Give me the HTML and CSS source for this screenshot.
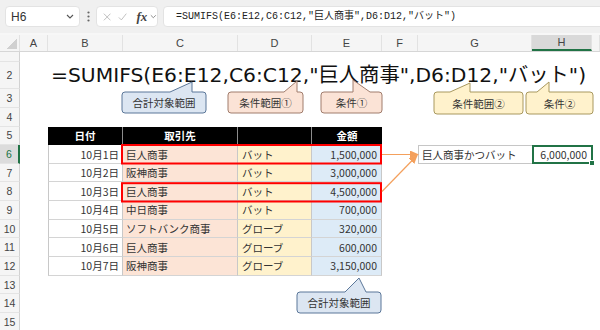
FILE: index.html
```html
<!DOCTYPE html>
<html lang="ja">
<head>
  <meta charset="UTF-8">
  <meta name="viewport" content="width=device-width, initial-scale=1.0">
  <title>SUMIFS 複数条件</title>
  <link rel="stylesheet" href="styles.css">
</head>
<body>

<div class="app">
  <!-- Formula bar -->
  <div class="toolbar">
    <div class="name-box">
      <span>H6</span>
      <svg class="chev" width="8" height="5" viewBox="0 0 8 5"><path d="M1 1l3 3 3-3" fill="none" stroke="#555" stroke-width="1.1"/></svg>
    </div>
    <div class="grip">
      <svg width="3" height="11" viewBox="0 0 3 11"><circle cx="1.5" cy="1.5" r="1.1" fill="#666"/><circle cx="1.5" cy="5.5" r="1.1" fill="#666"/><circle cx="1.5" cy="9.5" r="1.1" fill="#666"/></svg>
    </div>
    <div class="fx-box">
      <svg width="10" height="10" viewBox="0 0 10 10"><path d="M1 1l8 8M9 1l-8 8" stroke="#b5b5b5" stroke-width="1"/></svg>
      <svg width="11" height="10" viewBox="0 0 11 10"><path d="M1 5.5l3 3 6-7.5" fill="none" stroke="#b5b5b5" stroke-width="1"/></svg>
      <span class="fx">fx</span>
      <svg width="8" height="5" viewBox="0 0 8 5"><path d="M1 1l3 3 3-3" fill="none" stroke="#777" stroke-width="1"/></svg>
    </div>
    <div class="formula-input">=SUMIFS(E6:E12,C6:C12,"巨人商事",D6:D12,"バット")</div>
  </div>

  <!-- Sheet -->
  <div class="sheet">
    <div class="row col-head">
      <div class="corner"></div>
      <div>A</div><div>B</div><div>C</div><div>D</div><div>E</div><div>F</div><div>G</div><div class="sel">H</div><div></div>
    </div>

    <div class="row r1"><div class="rh"></div></div>
    <div class="row r2">
      <div class="rh">2</div><div></div>
      <div class="big-formula">=SUMIFS(E6:E12,C6:C12,"巨人商事",D6:D12,"バット")</div>
    </div>
    <div class="row r3"><div class="rh">3</div></div>
    <div class="row r4"><div class="rh">4</div></div>

    <div class="row">
      <div class="rh">5</div><div></div>
      <div class="th">日付</div><div class="th">取引先</div><div class="th"></div><div class="th">金額</div>
    </div>
    <div class="row">
      <div class="rh rh-sel">6</div><div></div>
      <div class="td date">10月1日</div><div class="td corp">巨人商事</div><div class="td item">バット</div><div class="td amt">1,500,000</div>
      <div></div>
      <div class="result-label">巨人商事かつバット</div>
      <div class="result-cell">6,000,000<span class="handle"></span></div>
    </div>
    <div class="row">
      <div class="rh">7</div><div></div>
      <div class="td date">10月2日</div><div class="td corp">阪神商事</div><div class="td item">バット</div><div class="td amt">3,000,000</div>
    </div>
    <div class="row">
      <div class="rh">8</div><div></div>
      <div class="td date">10月3日</div><div class="td corp">巨人商事</div><div class="td item">バット</div><div class="td amt">4,500,000</div>
    </div>
    <div class="row">
      <div class="rh">9</div><div></div>
      <div class="td date">10月4日</div><div class="td corp">中日商事</div><div class="td item">バット</div><div class="td amt">700,000</div>
    </div>
    <div class="row">
      <div class="rh">10</div><div></div>
      <div class="td date">10月5日</div><div class="td corp">ソフトバンク商事</div><div class="td item">グローブ</div><div class="td amt">320,000</div>
    </div>
    <div class="row">
      <div class="rh">11</div><div></div>
      <div class="td date">10月6日</div><div class="td corp">巨人商事</div><div class="td item">グローブ</div><div class="td amt">600,000</div>
    </div>
    <div class="row">
      <div class="rh">12</div><div></div>
      <div class="td date">10月7日</div><div class="td corp">阪神商事</div><div class="td item">グローブ</div><div class="td amt">3,150,000</div>
    </div>
    <div class="row"><div class="rh">13</div></div>
    <div class="row"><div class="rh">14</div></div>
    <div class="row"><div class="rh">15</div></div>
  </div>

  <!-- Shapes drawn over the sheet -->
  <svg class="shapes" width="600" height="330" viewBox="0 0 600 330">
    <defs>
      <marker id="arrow" markerUnits="userSpaceOnUse" markerWidth="9" markerHeight="8" refX="8" refY="4" orient="auto">
        <path d="M0 0L9 4 0 8z" fill="#f4a05c"/>
      </marker>
    </defs>
    <path class="c-blue" d="M125 92H170L192 82V92H203Q206 92 206 95V110Q206 113 203 113H125Q122 113 122 110V95Q122 92 125 92Z"/>
    <path class="c-pink" d="M231 92H284L297 81V92H300Q303 92 303 95V110Q303 113 300 113H231Q228 113 228 110V95Q228 92 231 92Z"/>
    <path class="c-pink" d="M324 92H353V80L370 92H379Q382 92 382 95V110Q382 113 379 113H324Q321 113 321 110V95Q321 92 324 92Z"/>
    <path class="c-yellow" d="M437 92H450L470 83V92H520Q523 92 523 95V111Q523 114 520 114H437Q434 114 434 111V95Q434 92 437 92Z"/>
    <path class="c-yellow" d="M529 92H537L549 82V92H590Q593 92 593 95V111Q593 114 590 114H529Q526 114 526 111V95Q526 92 529 92Z"/>
    <path class="c-blue" d="M300 292H345L359 278L366 292H378Q381 292 381 295V310Q381 313 378 313H300Q297 313 297 310V295Q297 292 300 292Z"/>

    <rect class="hit" x="122" y="145" width="259" height="18.5"/>
    <rect class="hit" x="122" y="183.2" width="259" height="18.3"/>

    <line class="link" x1="382" y1="154.5" x2="418" y2="154.5" marker-end="url(#arrow)"/>
    <line class="link" x1="382" y1="191.5" x2="417" y2="155.5" marker-end="url(#arrow)"/>
  </svg>

  <div class="label lb-sum">合計対象範囲</div>
  <div class="label lb-range1">条件範囲①</div>
  <div class="label lb-cond1">条件①</div>
  <div class="label lb-range2">条件範囲②</div>
  <div class="label lb-cond2">条件②</div>
  <div class="label lb-sum2">合計対象範囲</div>
</div>

</body>
</html>
```

FILE: styles.css
```css
* {
  box-sizing: border-box;
}
body {
  margin: 0;
  background: #fff;
  font-family: "Noto Sans CJK JP", "Noto Sans", sans-serif;
  color: #333;
}
.app {
  position: relative;
  width: 600px;
  height: 330px;
  overflow: hidden;
}

/* formula bar */
.toolbar {
  display: flex;
  align-items: flex-start;
  height: 35px;
  padding: 6px 0 0 5px;
  background: #f0f0f0;
  border-bottom: 2px solid #f7f7f7;
}
.name-box, .fx-box, .formula-input {
  height: 21px;
  background: #fff;
  border: 1px solid #e3e3e3;
  border-radius: 4px;
}
.name-box {
  width: 75px;
  display: flex;
  align-items: center;
  justify-content: space-between;
  padding: 0 5px 0 5px;
  font-family: "Liberation Sans", sans-serif;
  font-size: 12px;
  color: #333;
}
.grip {
  width: 16px;
  height: 21px;
  display: flex;
  align-items: center;
  justify-content: center;
}
.fx-box {
  width: 62px;
  display: flex;
  align-items: center;
  gap: 7px;
  padding-left: 6px;
}
.fx {
  font-family: "Liberation Serif", serif;
  font-style: italic;
  font-weight: bold;
  font-size: 13px;
  color: #444;
  margin-left: 2px;
  margin-right: -4px;
}
.formula-input {
  flex: 1;
  margin-left: 5px;
  margin-right: -10px;
  padding-left: 12px;
  font-family: "Liberation Mono", "Noto Sans CJK JP", monospace;
  font-size: 10px;
  line-height: 19px;
  color: #222;
  white-space: nowrap;
}

/* sheet grid */
.row {
  display: grid;
  grid-template-columns: 20px 28px 75px 115px 74px 70px 36px 114px 60px 8px;
  height: 18.667px;
}
.col-head {
  height: 17px;
  background: #f5f5f5;
  border-bottom: 1px solid #d6d6d6;
}
.col-head div {
  display: flex;
  align-items: center;
  justify-content: center;
  border-right: 1px solid #e2e2e2;
  font-family: "Liberation Sans", sans-serif;
  font-size: 11px;
  color: #444;
}
.col-head .sel {
  background: #d9d9d9;
  border-bottom: 2px solid #217346;
}
.col-head .corner {
  background: linear-gradient(135deg, transparent 55%, #d0d0d0 56%);
  background-size: 12px 12px;
  background-repeat: no-repeat;
  background-position: right 2px bottom 2px;
}
.r1 { height: 10px; }
.r2 { height: 27px; }
.r3 { height: 19px; }
.r4 { height: 18.5px; }

.rh {
  display: flex;
  align-items: center;
  justify-content: center;
  background: #f5f5f5;
  border-right: 1px solid #d2d2d2;
  border-bottom: 1px solid #e4e4e4;
  font-family: "Liberation Sans", sans-serif;
  font-size: 10.5px;
  color: #444;
}
.rh-sel {
  background: #dcdcdc;
  border-right: 2px solid #217346;
  color: #217346;
}

.big-formula {
  grid-column: 3 / -1;
  display: flex;
  align-items: flex-end;
  padding-left: 3px;
  padding-bottom: 1px;
  font-family: "DejaVu Sans", "Noto Sans CJK JP", sans-serif;
  font-size: 20.3px;
  line-height: 26px;
  color: #111;
  white-space: nowrap;
}

/* data table */
.th {
  display: flex;
  align-items: center;
  justify-content: center;
  background: #000;
  color: #fff;
  font-weight: bold;
  font-size: 10.5px;
  border-right: 1px solid #8c8c8c;
}
.th:last-child {
  border-right: none;
}
.td {
  display: flex;
  align-items: center;
  font-size: 10.5px;
  white-space: nowrap;
  border-right: 1px solid #c8c8c8;
  border-bottom: 1px solid #d4d4d4;
}
.date {
  justify-content: flex-end;
  padding-right: 3px;
  background: #fff;
  border-left: 1px solid #c8c8c8;
}
.corp {
  padding-left: 3px;
  background: #fce4d6;
}
.item {
  padding-left: 4px;
  background: #fff2cc;
}
.amt {
  justify-content: flex-end;
  padding-right: 4px;
  background: #ddebf7;
}

.result-label {
  display: flex;
  align-items: center;
  padding-left: 3px;
  font-size: 10.5px;
  border: 1px solid #c6c6c6;
  border-right: none;
  white-space: nowrap;
}
.result-cell {
  position: relative;
  display: flex;
  align-items: center;
  justify-content: flex-end;
  padding-right: 4px;
  font-size: 10.5px;
  border: 2px solid #217346;
  margin-right: -1px;
}
.handle {
  position: absolute;
  right: -4px;
  bottom: -4px;
  width: 6px;
  height: 6px;
  background: #217346;
  border: 1px solid #fff;
}

/* callouts and arrows */
.shapes {
  position: absolute;
  left: 0;
  top: 0;
  pointer-events: none;
}
.c-blue {
  fill: #dce6f2;
  stroke: #5b7799;
  stroke-width: 1;
}
.c-pink {
  fill: #fbe3d6;
  stroke: #a07c6c;
  stroke-width: 1;
}
.c-yellow {
  fill: #fff2cc;
  stroke: #a8985e;
  stroke-width: 1;
}
.hit {
  fill: none;
  stroke: #ff0000;
  stroke-width: 2;
}
.link {
  stroke: #f4a05c;
  stroke-width: 1.2;
}
.label {
  position: absolute;
  display: flex;
  align-items: center;
  justify-content: center;
  height: 21px;
  font-size: 10.5px;
  color: #333;
  white-space: nowrap;
}
.lb-sum { left: 122px; top: 92px; width: 84px; }
.lb-range1 { left: 228px; top: 92px; width: 75px; }
.lb-cond1 { left: 321px; top: 92px; width: 61px; }
.lb-range2 { left: 434px; top: 92px; width: 89px; height: 22px; }
.lb-cond2 { left: 526px; top: 92px; width: 67px; height: 22px; }
.lb-sum2 { left: 297px; top: 292px; width: 84px; }
```
